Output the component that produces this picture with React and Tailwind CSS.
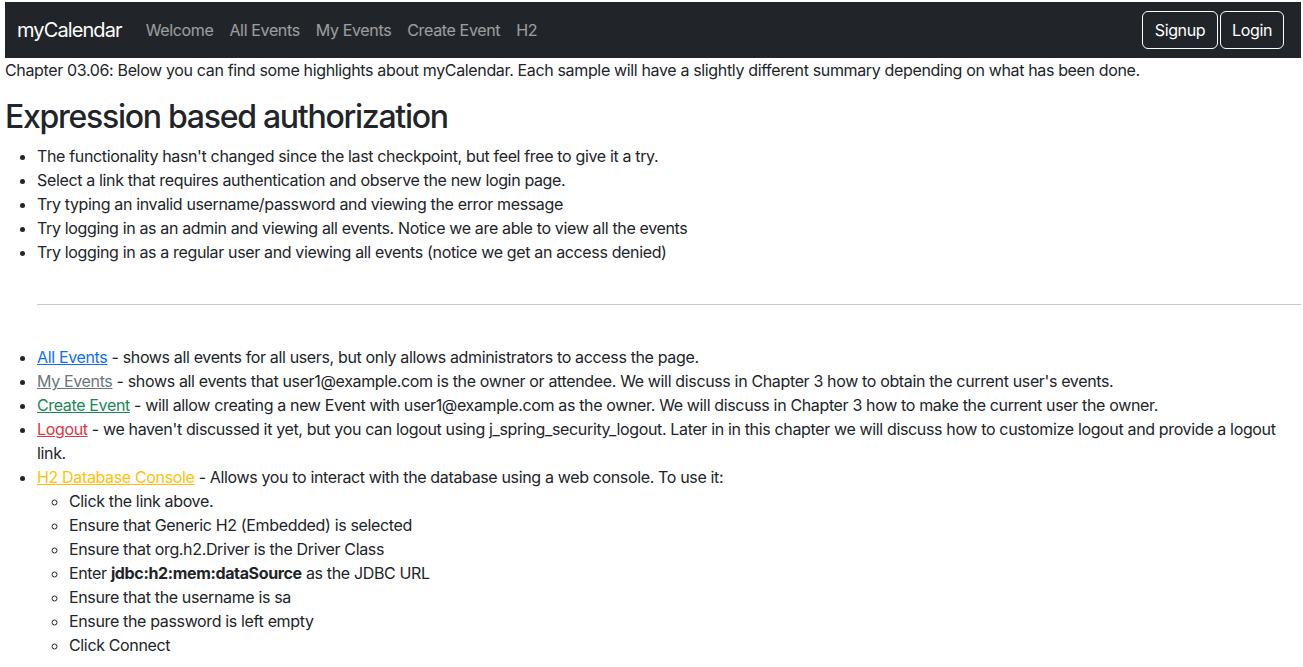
const navLinks = ["Welcome", "All Events", "My Events", "Create Event", "H2"];

const h2Steps = [
  "Click the link above.",
  "Ensure that Generic H2 (Embedded) is selected",
  "Ensure that org.h2.Driver is the Driver Class",
  null,
  "Ensure that the username is sa",
  "Ensure the password is left empty",
  "Click Connect",
];

export default function App() {
  return (
    <div className="min-h-screen bg-white pt-[2px] pl-[5px] pr-[2px] text-[16px] leading-[24px] tracking-[-0.022em] text-[#212529] font-['Inter','Noto_Sans',sans-serif]">
      <nav className="flex h-[56px] items-center justify-between bg-[#212529] pl-[12px] pr-[17px]">
        <div className="flex items-center">
          <a className="mr-[16px] py-[5px] text-[20px] leading-[30px] tracking-[-0.045em] text-white">myCalendar</a>
          <ul className="flex">
            {navLinks.map((l) => (
              <li key={l}>
                <a className="block px-[8px] py-[8px] text-white/55">{l}</a>
              </li>
            ))}
          </ul>
        </div>
        <div className="flex">
          <button className="h-[38px] w-[76px] rounded-[6px] border border-white text-white">Signup</button>
          <button className="ml-[2px] h-[38px] w-[64px] rounded-[6px] border border-white text-white">Login</button>
        </div>
      </nav>

      <p className="mb-[16px]">
        Chapter 03.06: Below you can find some highlights about myCalendar. Each sample will have a slightly different summary depending on what has been done.
      </p>

      <h1 className="mb-[8px] text-[32px] font-medium leading-[38px] tracking-[-0.04em]">Expression based authorization</h1>

      <ul className="mb-[16px] list-disc pl-[32px]">
        <li>The functionality hasn't changed since the last checkpoint, but feel free to give it a try.</li>
        <li>Select a link that requires authentication and observe the new login page.</li>
        <li>Try typing an invalid username/password and viewing the error message</li>
        <li>Try logging in as an admin and viewing all events. Notice we are able to view all the events</li>
        <li>Try logging in as a regular user and viewing all events (notice we get an access denied)</li>
      </ul>

      <div className="pl-[32px] pt-[24px]">
        <hr className="border-t border-[#212529]/25" />
      </div>

      <ul className="mt-[40px] list-disc pl-[32px]">
        <li>
          <a className="text-[#0d6efd] underline">All Events</a> - shows all events for all users, but only allows administrators to access the page.
        </li>
        <li>
          <a className="text-[#6c757d] underline">My Events</a> - shows all events that user1@example.com is the owner or attendee. We will discuss in Chapter 3 how to obtain the current user's events.
        </li>
        <li>
          <a className="text-[#198754] underline">Create Event</a> - will allow creating a new Event with user1@example.com as the owner. We will discuss in Chapter 3 how to make the current user the owner.
        </li>
        <li>
          <a className="text-[#dc3545] underline">Logout</a> - we haven't discussed it yet, but you can logout using j_spring_security_logout. Later in in this chapter we will discuss how to customize logout and provide a logout link.
        </li>
        <li>
          <a className="text-[#ffc107] underline">H2 Database Console</a> - Allows you to interact with the database using a web console. To use it:
          <ul className="list-[circle] pl-[32px]">
            {h2Steps.map((s, i) =>
              s ? (
                <li key={i}>{s}</li>
              ) : (
                <li key={i}>
                  Enter <b className="font-bold">jdbc:h2:mem:dataSource</b> as the JDBC URL
                </li>
              )
            )}
          </ul>
        </li>
      </ul>
    </div>
  );
}
